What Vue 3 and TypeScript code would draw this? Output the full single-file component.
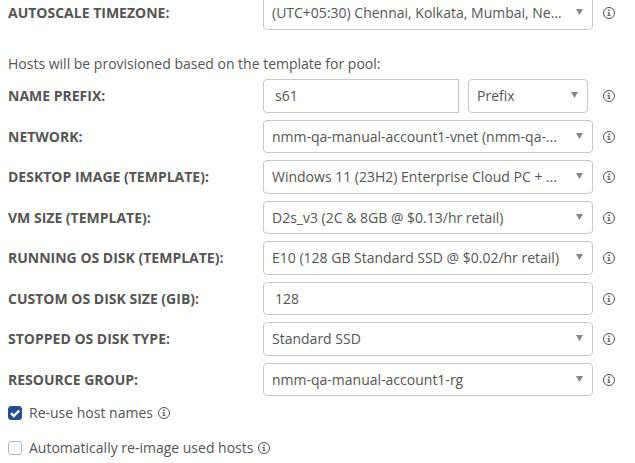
<script setup lang="ts">
import { defineComponent, h, ref } from 'vue'

interface Field {
  id: string
  label: string
  kind: 'select' | 'text'
  value: string
}

const InfoIcon = defineComponent({
  name: 'InfoIcon',
  render() {
    return h('svg', { viewBox: '0 0 12 12', width: 12, height: 12, 'aria-hidden': 'true' }, [
      h('circle', { cx: 6, cy: 6, r: 5.5, fill: 'none', stroke: '#505050', 'stroke-width': 1 }),
      h('path', {
        d: 'M5.3 2.6h1.4v1.3H5.3zM4.4 4.9h2.2v3.3h1v.8H4.4v-.8h1V5.7h-1z',
        fill: '#505050',
      }),
    ])
  },
})

const timezone = ref('(UTC+05:30) Chennai, Kolkata, Mumbai, New Delhi')
const prefix = ref('s61')
const prefixMode = ref('Prefix')

const fields = ref<Field[]>([
  { id: 'network', label: 'Network:', kind: 'select', value: 'nmm-qa-manual-account1-vnet (nmm-qa-manual)' },
  { id: 'image', label: 'Desktop image (template):', kind: 'select', value: 'Windows 11 (23H2) Enterprise Cloud PC + Microsoft 365 Apps' },
  { id: 'vm-size', label: 'VM size (template):', kind: 'select', value: 'D2s_v3 (2C & 8GB @ $0.13/hr retail)' },
  { id: 'running-disk', label: 'Running OS disk (template):', kind: 'select', value: 'E10 (128 GB Standard SSD @ $0.02/hr retail)' },
  { id: 'disk-size', label: 'Custom OS disk size (GiB):', kind: 'text', value: '128' },
  { id: 'stopped-disk', label: 'Stopped OS disk type:', kind: 'select', value: 'Standard SSD' },
  { id: 'resource-group', label: 'Resource group:', kind: 'select', value: 'nmm-qa-manual-account1-rg' },
])

const options = ref([
  { id: 'reuse', label: 'Re-use host names', checked: true },
  { id: 'reimage', label: 'Automatically re-image used hosts', checked: false },
])
</script>

<template>
  <form class="form" @submit.prevent>
    <div class="row">
      <label class="name" for="timezone">Autoscale timezone:</label>
      <div class="control">
        <select id="timezone" v-model="timezone">
          <option>{{ timezone }}</option>
        </select>
      </div>
      <button class="info" type="button" aria-label="Info"><InfoIcon /></button>
    </div>

    <p class="intro">Hosts will be provisioned based on the template for pool:</p>

    <div class="rows">
      <div class="row">
        <label class="name" for="prefix">Name prefix:</label>
        <div class="control split">
          <input id="prefix" v-model="prefix" class="joined" type="text" />
          <select v-model="prefixMode" class="mode" aria-label="Prefix mode">
            <option>Prefix</option>
          </select>
        </div>
        <button class="info" type="button" aria-label="Info"><InfoIcon /></button>
      </div>
      <div v-for="field in fields" :key="field.id" class="row">
        <label class="name" :for="field.id">{{ field.label }}</label>
        <div class="control">
          <select v-if="field.kind === 'select'" :id="field.id" v-model="field.value">
            <option>{{ field.value }}</option>
          </select>
          <input v-else :id="field.id" v-model="field.value" type="text" />
        </div>
        <button class="info" type="button" aria-label="Info"><InfoIcon /></button>
      </div>
    </div>

    <div class="checks">
      <div v-for="option in options" :key="option.id" class="check">
        <span class="tick">
          <input :id="option.id" v-model="option.checked" type="checkbox" />
          <svg v-if="option.checked" viewBox="0 0 14 14" width="14" height="14" aria-hidden="true">
            <path d="M3 7.2 5.8 10 11.2 4.5" fill="none" stroke="#fff" stroke-width="2.4" />
          </svg>
        </span>
        <label :for="option.id">{{ option.label }}</label>
        <button class="info" type="button" aria-label="Info"><InfoIcon /></button>
      </div>
    </div>
  </form>
</template>

<style>
body {
  margin: 0;
  background: #fff;
}
</style>

<style scoped>
.form {
  margin-top: -4px;
  padding: 0 20px 0 8px;
  color: #555;
  font: 14px/20px 'Open Sans', sans-serif;
}

.row {
  display: grid;
  grid-template-columns: 255px minmax(0, 1fr) 12px;
  align-items: center;
  height: 34px;
}

.rows {
  display: flex;
  flex-direction: column;
  gap: 7px;
}

.rows .row:nth-child(even) {
  height: 33px;
}

.name {
  font-weight: 700;
  text-transform: uppercase;
}

.control {
  display: flex;
  height: 100%;
  padding-right: 10px;
}

.split {
  gap: 9px;
  padding-right: 15px;
}

.control input,
.control select {
  box-sizing: border-box;
  flex: 1;
  min-width: 0;
  width: 100%;
  height: 100%;
  margin: 0;
  border: 1px solid #c8c8c8;
  border-radius: 4px;
  outline: none;
  background-color: #fff;
  color: #555;
  font: inherit;
}

.control input {
  padding: 0 11px 1px;
}

.control .joined {
  border-radius: 4px 0 0 4px;
}

.control select {
  appearance: none;
  padding: 0 29px 0 8px;
  background-image: url("data:image/svg+xml,%3Csvg xmlns='http://www.w3.org/2000/svg' width='7' height='8'%3E%3Cpath d='M0 0h7L3.5 6z' fill='%23888'/%3E%3C/svg%3E");
  background-repeat: no-repeat;
  background-position: right 9px center;
  text-overflow: ellipsis;
  white-space: nowrap;
  overflow: hidden;
}

.control .mode {
  flex: 0 0 120px;
}

.info {
  display: flex;
  padding: 0;
  border: 0;
  background: none;
}

.intro {
  margin: 24px 0 5px;
}

.checks {
  display: flex;
  flex-direction: column;
  gap: 15px;
  margin-top: 7px;
}

.check {
  display: flex;
  align-items: center;
}

.check .info {
  margin-left: 5px;
}

.tick {
  display: grid;
  margin-right: 7px;
}

.tick input,
.tick svg {
  grid-area: 1 / 1;
}

.tick svg {
  pointer-events: none;
}

.tick input {
  appearance: none;
  box-sizing: border-box;
  width: 14px;
  height: 14px;
  margin: 0;
  border: 1px solid #adb5bd;
  border-radius: 3px;
  background: #fff;
}

.tick input:checked {
  border-color: #24508f;
  background: #24508f;
}
</style>
